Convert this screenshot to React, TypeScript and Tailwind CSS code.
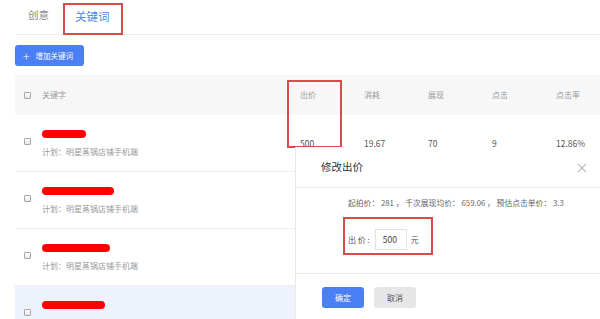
import React from "react";

const font = { fontFamily: '"Noto Sans CJK SC", "Noto Sans", sans-serif' };

function Check() {
  return <div className="w-[7px] h-[7px] border border-[#a8a8a8] rounded-[1px] bg-gradient-to-b from-white to-[#e6e6e6]" />;
}

function Row({ blob, values, highlight, plan = true }: { blob: number; values?: string[]; highlight?: boolean; plan?: boolean }) {
  return (
    <div className={`flex items-center h-[57px] border-b border-[#eeeeee] ${highlight ? "bg-[#edf2fc]" : "bg-white"}`}>
      <div className="w-[27px] shrink-0 pl-[9px] flex items-center">
        <div className="mt-[-4px]"><Check /></div>
      </div>
      <div className="w-[258px] shrink-0 flex flex-col">
        <div className="h-[8px] bg-[#ff0000] rounded-full" style={{ width: blob }} />
        {plan ? (
          <div className="mt-[9px] text-[8px] leading-[10px] text-[#999]">计划：明星蒸锅店铺手机端</div>
        ) : (
          <div className="mt-[9px] h-[10px]" />
        )}
      </div>
      {values && values.map((v, i) => (
        <div key={i} className="w-[64px] shrink-0 text-[8.5px] text-[#555] leading-[10px]">{v}</div>
      ))}
    </div>
  );
}

export default function App() {
  return (
    <div className="relative w-[600px] h-[319px] overflow-hidden bg-white" style={font}>
      {/* tabs */}
      <div className="ml-[15px] flex items-start h-[35px] border-b border-[#eeeeee]">
        <div className="pl-[13px] pt-[9px] text-[10.5px] leading-[12px] text-[#888]">创意</div>
        <div className="ml-[14px] mt-[3px] h-[32px] w-[60px] border-2 border-[#d94a4a] pl-[10px] pt-[4px] text-[11.5px] leading-[14px] text-[#4f86ee]">关键词</div>
      </div>
      {/* button */}
      <div className="ml-[15px] mt-[10px] w-[69px] h-[21px] rounded-[3px] bg-[#4b7ff5] flex items-center text-white">
        <span className="ml-[8px] text-[12px] leading-[12px] font-light">+</span>
        <span className="ml-[6px] text-[7.5px] leading-[10px]">增加关键词</span>
      </div>
      {/* table */}
      <div className="ml-[15px] mt-[9px] w-[585px] overflow-hidden">
        <div className="flex items-center h-[40px] bg-[#f7f7f7]">
          <div className="w-[27px] shrink-0 pl-[9px] flex items-center"><Check /></div>
          <div className="w-[258px] shrink-0 text-[8px] text-[#999] leading-[10px]">关键字</div>
          {["出价", "消耗", "展现", "点击", "点击率"].map((h) => (
            <div key={h} className="w-[64px] shrink-0 text-[8px] text-[#999] leading-[10px]">{h}</div>
          ))}
        </div>
        <Row blob={44} values={["500", "19.67", "70", "9", "12.86%"]} />
        <Row blob={72} />
        <Row blob={68} />
        <Row blob={63} highlight plan={false} />
      </div>

      {/* red annotation around 出价 column */}
      <div className="absolute left-[287px] top-[80px] w-[55px] h-[68px] border-2 border-[#d94a4a]" />

      {/* dialog */}
      <div className="absolute left-[295px] top-[147px] w-[305px] h-[172px] bg-white border-l border-[#e8e8e8] flex flex-col">
        <div className="h-[41px] border-b border-[#eeeeee] flex items-center justify-between pl-[25px] pr-[13px]">
          <span className="text-[10.5px] text-[#333] leading-[12px]">修改出价</span>
          <svg width="10" height="10" viewBox="0 0 10 10" className="mt-[2px]">
            <path d="M1 1 L9 9 M9 1 L1 9" stroke="#c0c0c0" strokeWidth="1.3" />
          </svg>
        </div>
        <div className="h-[86px] border-b border-[#eeeeee] flex flex-col pl-[47px]">
          <div className="mt-[10px] pl-[5px] text-[7.8px] leading-[10px] text-[#666] whitespace-pre">起拍价： 281 ， 千次展现均价： 659.06 ， 预估点击单价： 3.3</div>
          <div className="mt-[9px] w-[90px] h-[38px] border-2 border-[#d94a4a] flex items-start pt-[10px] pl-[3px]">
            <span className="mt-[6px] text-[8px] leading-[10px] text-[#555] whitespace-pre">出 价 :</span>
            <div className="ml-[5px] w-[32px] h-[21px] border border-[#e2e2e2] bg-white flex items-center pl-[7px] text-[8.5px] text-[#444]">500</div>
            <span className="mt-[6px] ml-[4px] text-[8px] leading-[10px] text-[#555]">元</span>
          </div>
        </div>
        <div className="flex pl-[26px] pt-[13px] gap-[10px]">
          <div className="w-[42px] h-[21px] rounded-[3px] bg-[#4b7ff5] text-white text-[8px] flex items-center justify-center">确定</div>
          <div className="w-[42px] h-[21px] rounded-[3px] bg-[#e6e6e6] text-[#555] text-[8px] flex items-center justify-center">取消</div>
        </div>
      </div>
    </div>
  );
}
